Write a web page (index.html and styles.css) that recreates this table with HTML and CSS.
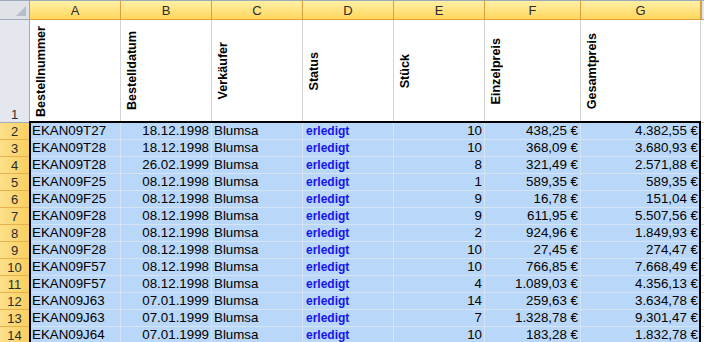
FILE: index.html
```html
<!DOCTYPE html>
<html lang="de">
<head>
<meta charset="utf-8">
<title>Bestellungen</title>
<link rel="stylesheet" href="styles.css">
</head>
<body>
<div class="sheet">
  <div class="grid">
    <div class="corner"><span class="tri"></span></div>
    <div class="colh">A</div><div class="colh">B</div><div class="colh">C</div><div class="colh">D</div><div class="colh">E</div><div class="colh">F</div><div class="colh">G</div><div class="colh rest"></div>

    <div class="rowh plain">1</div>
    <div class="hd"><span class="vt">Bestellnummer</span></div>
    <div class="hd"><span class="vt">Bestelldatum</span></div>
    <div class="hd"><span class="vt">Verkäufer</span></div>
    <div class="hd"><span class="vt">Status</span></div>
    <div class="hd"><span class="vt">Stück</span></div>
    <div class="hd"><span class="vt">Einzelpreis</span></div>
    <div class="hd"><span class="vt">Gesamtpreis</span></div>
    <div class="hd rest"></div>

    <div class="rowh">2</div><div class="c">EKAN09T27</div><div class="c r">18.12.1998</div><div class="c">Blumsa</div><div class="c st">erledigt</div><div class="c r">10</div><div class="c r">438,25 €</div><div class="c r">4.382,55 €</div><div class="c rest"></div>
    <div class="rowh">3</div><div class="c">EKAN09T28</div><div class="c r">18.12.1998</div><div class="c">Blumsa</div><div class="c st">erledigt</div><div class="c r">10</div><div class="c r">368,09 €</div><div class="c r">3.680,93 €</div><div class="c rest"></div>
    <div class="rowh">4</div><div class="c">EKAN09T28</div><div class="c r">26.02.1999</div><div class="c">Blumsa</div><div class="c st">erledigt</div><div class="c r">8</div><div class="c r">321,49 €</div><div class="c r">2.571,88 €</div><div class="c rest"></div>
    <div class="rowh">5</div><div class="c">EKAN09F25</div><div class="c r">08.12.1998</div><div class="c">Blumsa</div><div class="c st">erledigt</div><div class="c r">1</div><div class="c r">589,35 €</div><div class="c r">589,35 €</div><div class="c rest"></div>
    <div class="rowh">6</div><div class="c">EKAN09F25</div><div class="c r">08.12.1998</div><div class="c">Blumsa</div><div class="c st">erledigt</div><div class="c r">9</div><div class="c r">16,78 €</div><div class="c r">151,04 €</div><div class="c rest"></div>
    <div class="rowh">7</div><div class="c">EKAN09F28</div><div class="c r">08.12.1998</div><div class="c">Blumsa</div><div class="c st">erledigt</div><div class="c r">9</div><div class="c r">611,95 €</div><div class="c r">5.507,56 €</div><div class="c rest"></div>
    <div class="rowh">8</div><div class="c">EKAN09F28</div><div class="c r">08.12.1998</div><div class="c">Blumsa</div><div class="c st">erledigt</div><div class="c r">2</div><div class="c r">924,96 €</div><div class="c r">1.849,93 €</div><div class="c rest"></div>
    <div class="rowh">9</div><div class="c">EKAN09F28</div><div class="c r">08.12.1998</div><div class="c">Blumsa</div><div class="c st">erledigt</div><div class="c r">10</div><div class="c r">27,45 €</div><div class="c r">274,47 €</div><div class="c rest"></div>
    <div class="rowh">10</div><div class="c">EKAN09F57</div><div class="c r">08.12.1998</div><div class="c">Blumsa</div><div class="c st">erledigt</div><div class="c r">10</div><div class="c r">766,85 €</div><div class="c r">7.668,49 €</div><div class="c rest"></div>
    <div class="rowh">11</div><div class="c">EKAN09F57</div><div class="c r">08.12.1998</div><div class="c">Blumsa</div><div class="c st">erledigt</div><div class="c r">4</div><div class="c r">1.089,03 €</div><div class="c r">4.356,13 €</div><div class="c rest"></div>
    <div class="rowh">12</div><div class="c">EKAN09J63</div><div class="c r">07.01.1999</div><div class="c">Blumsa</div><div class="c st">erledigt</div><div class="c r">14</div><div class="c r">259,63 €</div><div class="c r">3.634,78 €</div><div class="c rest"></div>
    <div class="rowh">13</div><div class="c">EKAN09J63</div><div class="c r">07.01.1999</div><div class="c">Blumsa</div><div class="c st">erledigt</div><div class="c r">7</div><div class="c r">1.328,78 €</div><div class="c r">9.301,47 €</div><div class="c rest"></div>
    <div class="rowh">14</div><div class="c">EKAN09J64</div><div class="c r">07.01.1999</div><div class="c">Blumsa</div><div class="c st">erledigt</div><div class="c r">10</div><div class="c r">183,28 €</div><div class="c r">1.832,78 €</div><div class="c rest"></div>
  </div>
  <div class="selection"></div>
</div>
</body>
</html>
```

FILE: styles.css
```css
html, body {
  margin: 0;
  padding: 0;
  background: #ffffff;
  overflow: hidden;
}
.sheet {
  position: relative;
  width: 704px;
  height: 342px;
  overflow: hidden;
  font-family: "Liberation Sans", Arial, sans-serif;
  font-size: 13.33px;
  color: #000;
}
.grid {
  display: grid;
  grid-template-columns: 30px 91px 91px 91px 91px 91px 96px 120px 1fr;
  grid-template-rows: 20px 103px repeat(13, 17px);
}
.corner {
  position: relative;
  background: #dfe3e8;
  border-top: 1px solid #9eaab8;
  border-right: 1px solid #9eaab8;
  border-bottom: 1px solid #9eaab8;
}
.tri {
  position: absolute;
  right: 3px;
  bottom: 3px;
  width: 0;
  height: 0;
  border-left: 10px solid transparent;
  border-bottom: 10px solid #b7bec8;
}
.colh {
  background: linear-gradient(#fff0a6, #ffd75c);
  border-top: 1px solid #9eaab8;
  border-right: 1px solid #d8a03e;
  border-bottom: 1px solid #e4a23b;
  display: flex;
  align-items: center;
  justify-content: center;
  font-size: 13px;
  color: #2b2b2b;
  line-height: 1;
}
.colh.rest {
  background: #e3e7ed;
  border-right: none;
  border-bottom: 1px solid #9eaab8;
  border-left: 1px solid #9eaab8;
}
.rowh {
  background: linear-gradient(90deg, #fde08a, #f9cf5f);
  border-right: 1px solid #d9a43f;
  border-bottom: 1px solid #e6b250;
  display: flex;
  align-items: center;
  justify-content: center;
  font-size: 13px;
  color: #2b2b2b;
  line-height: 1;
}
.rowh.plain {
  background: #e4e8ee;
  border-right: 1px solid #9eaab8;
  border-bottom: 1px solid #9eaab8;
  align-items: flex-end;
  padding-bottom: 1px;
}
.hd {
  border-right: 1px solid #d4d4d4;
  border-bottom: 1px solid #d4d4d4;
  display: flex;
  align-items: center;
  padding: 0 0 0 5px;
}
.hd.rest {
  border-right: none;
}
.vt {
  writing-mode: vertical-rl;
  transform: rotate(180deg);
  font-weight: bold;
  font-size: 12.6px;
  line-height: 13px;
  white-space: nowrap;
}
.c {
  background: #b9d7f8;
  border-right: 1px solid #d5e3f3;
  border-bottom: 1px solid #d5e3f3;
  padding: 0 2px 0 2px;
  line-height: 16px;
  white-space: nowrap;
  overflow: hidden;
}
.c.r {
  text-align: right;
}
.c.st {
  color: #1414f0;
  font-weight: bold;
  font-size: 12px;
  padding-left: 3px;
}
.c.rest {
  background: #ffffff;
  border-right: none;
  border-bottom: 1px solid #d4d4d4;
}
.selection {
  position: absolute;
  left: 29px;
  top: 121px;
  width: 668px;
  height: 240px;
  border: 2px solid #000;
  pointer-events: none;
}
```
